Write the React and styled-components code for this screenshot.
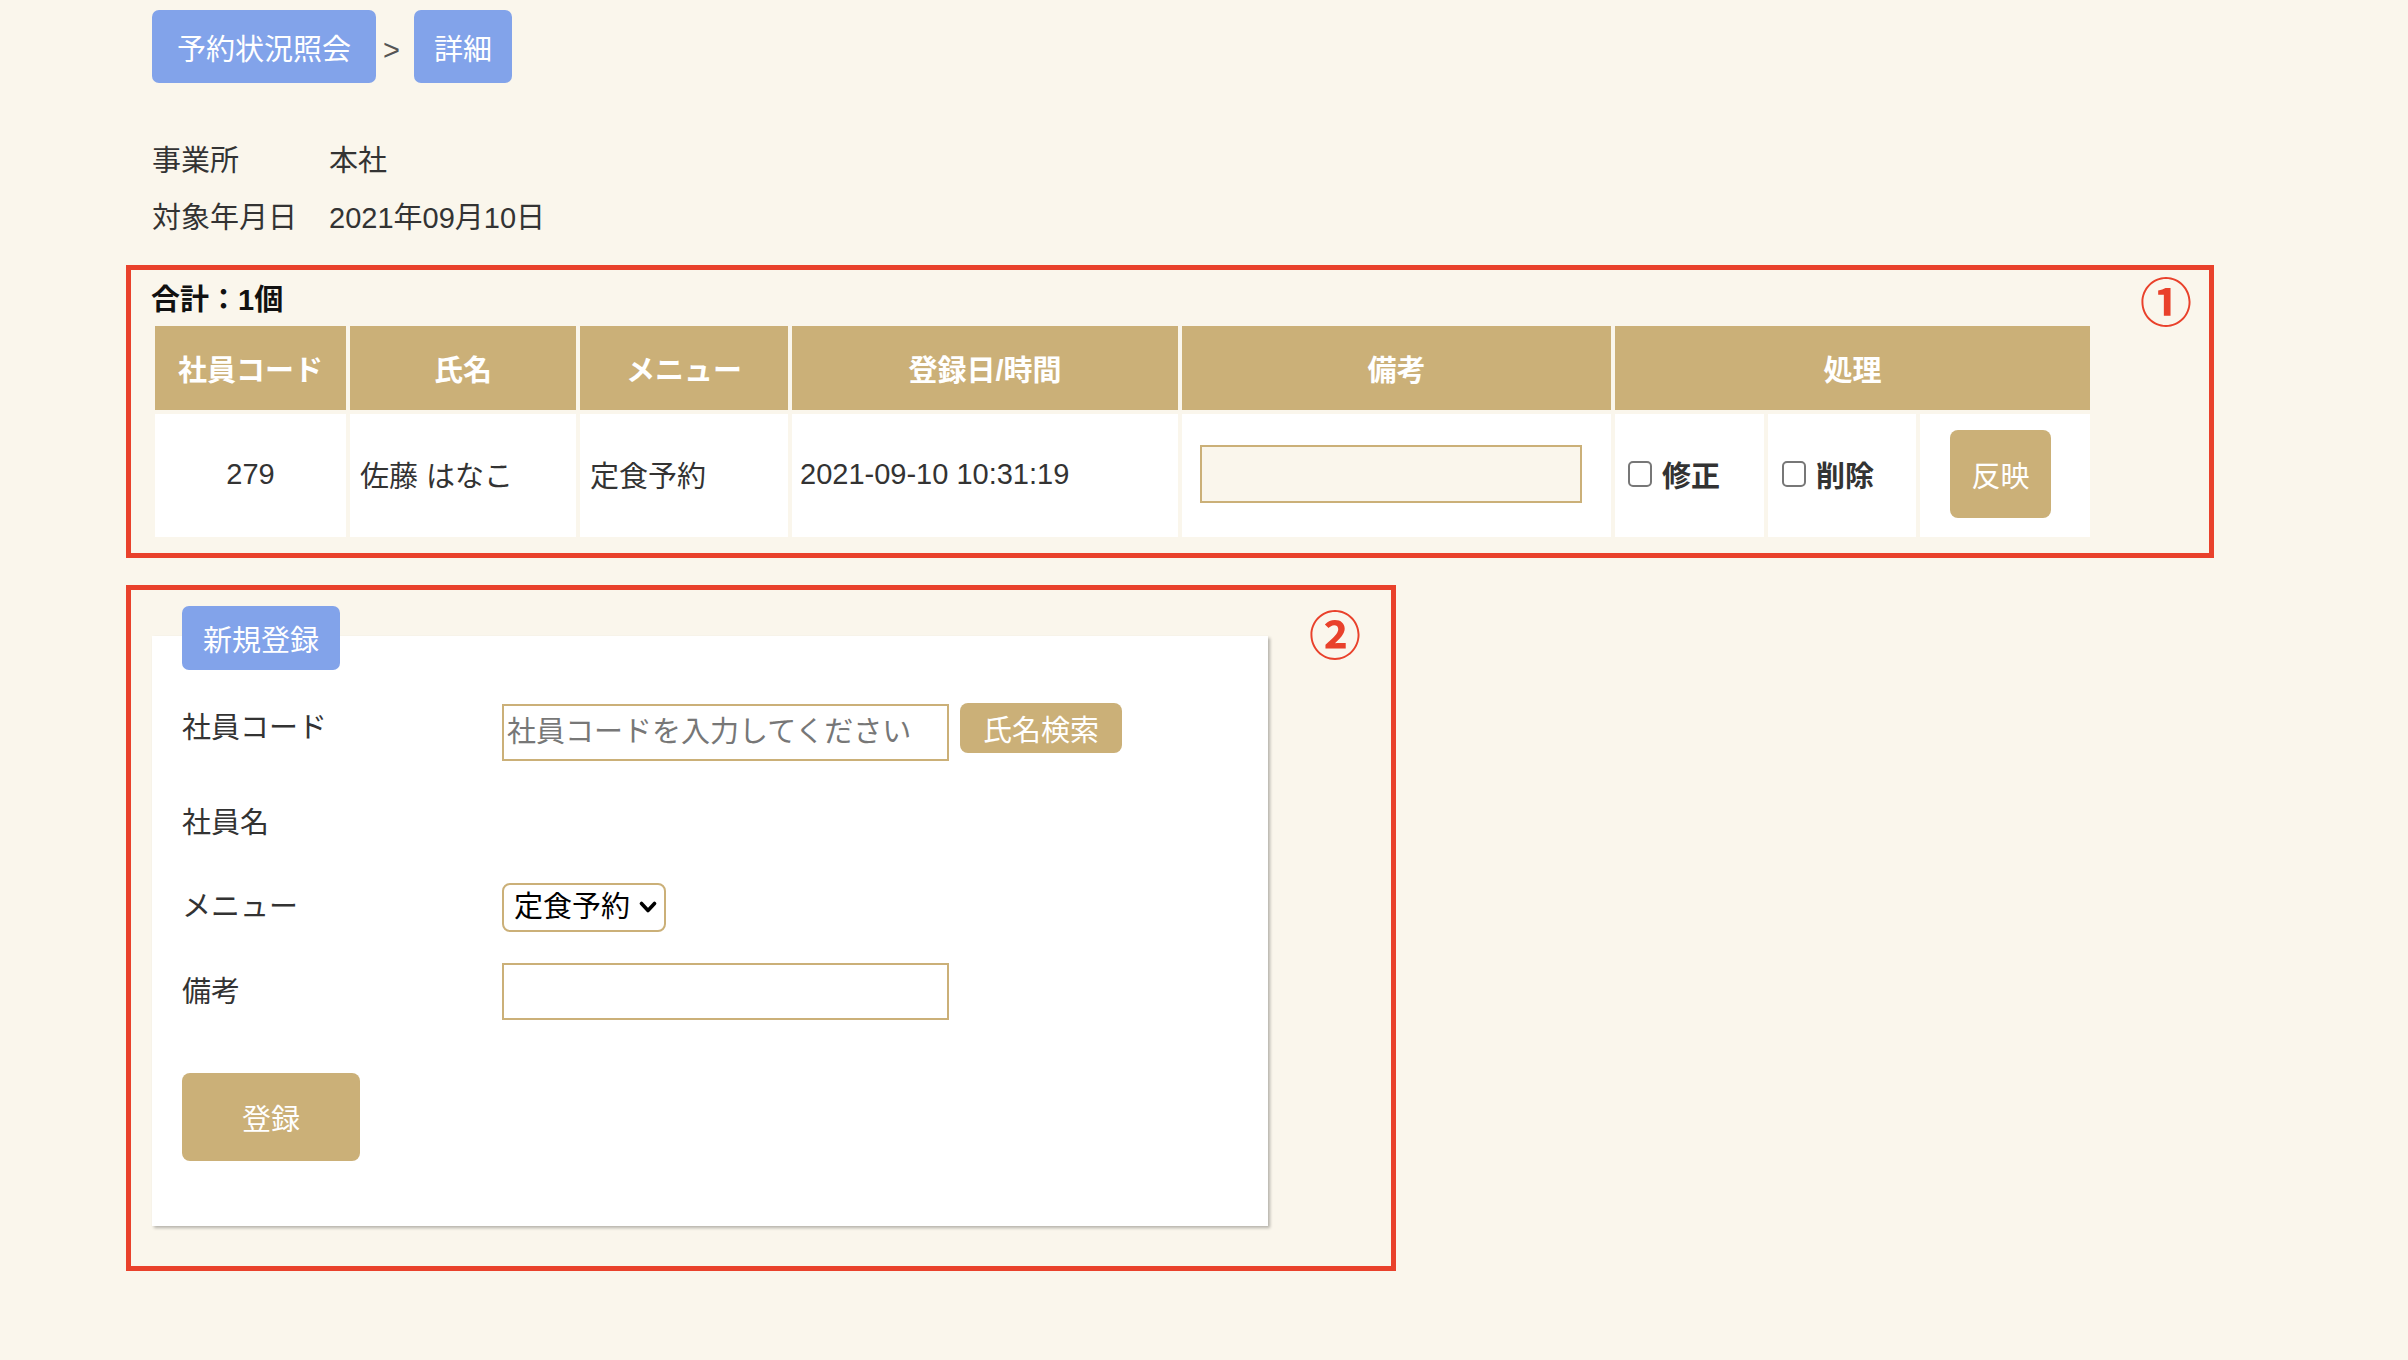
import React from 'react'
import styled, { createGlobalStyle } from 'styled-components'

const FONT = `"Liberation Sans", "Noto Sans CJK JP", sans-serif`
const TAN = '#cbb078'
const BLUE = '#82a3ea'
const RED = '#e9412b'
const INK = '#333'
const CREAM = '#faf6ec'

const GlobalStyle = createGlobalStyle`
  * { box-sizing: border-box; }
  html, body { margin: 0; padding: 0; background: ${CREAM}; }
  body {
    font-family: ${FONT};
    font-size: 29px;
    color: ${INK};
  }
  button, input, select { font-family: inherit; }
`

const Page = styled.div`
  min-height: 1360px;
  padding: 10px 0 0 126px;
  display: flex;
  flex-direction: column;
  align-items: flex-start;
`

const Breadcrumb = styled.nav`
  display: flex;
  align-items: center;
  margin-left: 26px;
`

const CrumbButton = styled.button`
  height: 73px;
  padding: 0 ${p => p.$pad}px;
  border: none;
  border-radius: 7px;
  background: ${BLUE};
  color: #fff;
  font-size: 29px;
`

const CrumbSep = styled.span`
  margin: 8px 14px 0 7px;
  color: #555;
  font-size: 29px;
`

const InfoList = styled.dl`
  display: grid;
  grid-template-columns: 177px auto;
  grid-auto-rows: 57px;
  align-items: center;
  margin: 46px 0 0 26px;

  dt, dd {
    margin: 0;
  }
`

const Annotated = styled.section`
  position: relative;
  width: ${p => p.$width}px;
  margin-top: ${p => p.$top}px;
  padding: ${p => p.$pad};
  border: 5px solid ${RED};
`

const Marker = styled.span`
  position: absolute;
  top: ${p => p.$top}px;
  right: ${p => p.$right}px;
  color: ${RED};
  font-family: "Noto Sans CJK JP", sans-serif;
  font-size: 52px;
  font-weight: 700;
  line-height: 1;
`

const Total = styled.div`
  font-weight: 700;
  line-height: 40px;
  color: #111;
`

const Table = styled.table`
  border-collapse: separate;
  border-spacing: 4px;
  table-layout: fixed;
  width: 1943px;
  margin-top: 2px;
`

const Col = styled.col`
  width: ${p => p.$w}px;
`

const HeadCell = styled.th`
  height: 84px;
  padding: 0;
  background: ${TAN};
  color: #fff;
  font-weight: 700;
  text-align: center;
`

const Cell = styled.td`
  height: 123px;
  padding: 0 0 3px ${p => p.$pad}px;
  background: #fff;
  text-align: ${p => (p.$center ? 'center' : 'left')};
  white-space: nowrap;
`

const NoteInput = styled.input`
  display: block;
  width: 382px;
  height: 58px;
  border: 2px solid ${TAN};
  background: ${CREAM};
  outline: none;
`

const CheckLabel = styled.label`
  display: inline-flex;
  align-items: center;
  gap: 10px;
  font-weight: 700;
`

const CheckBox = styled.input.attrs({ type: 'checkbox' })`
  appearance: none;
  width: 24px;
  height: 26px;
  margin: 0;
  border: 2px solid #777;
  border-radius: 5px;
  background: #fff;
`

const TanButton = styled.button`
  width: ${p => p.$w}px;
  height: ${p => p.$h}px;
  margin-left: ${p => p.$ml || 0}px;
  margin-top: ${p => p.$mt || 0}px;
  padding: 0;
  border: none;
  border-radius: 8px;
  background: ${TAN};
  color: #fff;
  font-size: 29px;
`

const Panel = styled.div`
  display: flex;
  flex-direction: column;
  align-items: flex-start;
  width: 1116px;
  margin-top: 30px;
  padding: 0 30px 65px;
  background: #fff;
  box-shadow: 2px 2px 3px rgba(0, 0, 0, 0.28);
`

const PanelTab = styled.div`
  display: flex;
  align-items: center;
  height: 64px;
  margin-top: -30px;
  padding: 0 21px;
  border-radius: 7px;
  background: ${BLUE};
  color: #fff;
`

const FormRow = styled.div`
  display: grid;
  grid-template-columns: 320px auto;
  align-items: ${p => (p.$top ? 'start' : 'center')};
  margin-top: ${p => p.$gap}px;
`

const FormLabel = styled.span`
  line-height: 50px;
`

const Field = styled.div`
  display: flex;
  align-items: flex-start;
`

const TextInput = styled.input`
  width: 447px;
  height: 57px;
  margin-top: ${p => p.$mt || 0}px;
  padding: 0 3px;
  border: 2px solid ${TAN};
  background: #fff;
  font-size: 29px;
  color: ${INK};
  outline: none;

  &::placeholder {
    color: #777;
  }
`

const SelectWrap = styled.div`
  position: relative;
  width: 164px;
  height: 49px;

  svg {
    position: absolute;
    right: 9px;
    top: 18px;
    pointer-events: none;
  }
`

const Select = styled.select`
  appearance: none;
  width: 100%;
  height: 100%;
  padding: 0 0 0 10px;
  border: 2px solid ${TAN};
  border-radius: 8px;
  background: #fff;
  color: #000;
  font-size: 29px;
  outline: none;
`

const columns = [191, 226, 208, 386, 429, 149, 148, 170]

export default function App () {
  return (
    <>
      <GlobalStyle />
      <Page>
        <Breadcrumb>
          <CrumbButton $pad={25}>予約状況照会</CrumbButton>
          <CrumbSep>&gt;</CrumbSep>
          <CrumbButton $pad={20}>詳細</CrumbButton>
        </Breadcrumb>

        <InfoList>
          <dt>事業所</dt>
          <dd>本社</dd>
          <dt>対象年月日</dt>
          <dd>2021年09月10日</dd>
        </InfoList>

        <Annotated $width={2088} $top={22} $pad='10px 0 12px 20px'>
          <Marker $top={4} $right={17}>①</Marker>
          <Total>合計：1個</Total>
          <Table>
            <colgroup>
              {columns.map((w, i) => <Col key={i} $w={w} />)}
            </colgroup>
            <thead>
              <tr>
                <HeadCell>社員コード</HeadCell>
                <HeadCell>氏名</HeadCell>
                <HeadCell>メニュー</HeadCell>
                <HeadCell>登録日/時間</HeadCell>
                <HeadCell>備考</HeadCell>
                <HeadCell colSpan={3}>処理</HeadCell>
              </tr>
            </thead>
            <tbody>
              <tr>
                <Cell $pad={0} $center>279</Cell>
                <Cell $pad={10}>佐藤 はなこ</Cell>
                <Cell $pad={10}>定食予約</Cell>
                <Cell $pad={8}>2021-09-10 10:31:19</Cell>
                <Cell $pad={18}><NoteInput /></Cell>
                <Cell $pad={13}>
                  <CheckLabel><CheckBox />修正</CheckLabel>
                </Cell>
                <Cell $pad={14}>
                  <CheckLabel><CheckBox />削除</CheckLabel>
                </Cell>
                <Cell $pad={30}>
                  <TanButton $w={101} $h={88}>反映</TanButton>
                </Cell>
              </tr>
            </tbody>
          </Table>
        </Annotated>

        <Annotated $width={1270} $top={27} $pad='16px 0 40px 21px'>
          <Marker $top={17} $right={30}>②</Marker>
          <Panel>
            <PanelTab>新規登録</PanelTab>

            <FormRow $gap={33} $top>
              <FormLabel>社員コード</FormLabel>
              <Field>
                <TextInput $mt={1} placeholder='社員コードを入力してください' />
                <TanButton $w={162} $h={50} $ml={11}>氏名検索</TanButton>
              </Field>
            </FormRow>

            <FormRow $gap={37}>
              <FormLabel>社員名</FormLabel>
              <span />
            </FormRow>

            <FormRow $gap={34}>
              <FormLabel>メニュー</FormLabel>
              <SelectWrap>
                <Select defaultValue='teishoku'>
                  <option value='teishoku'>定食予約</option>
                </Select>
                <svg width='18' height='13' viewBox='0 0 18 13'>
                  <path d='M2.5 2.5 L9 9.5 L15.5 2.5' fill='none' stroke='#000' strokeWidth='3.6' strokeLinecap='round' strokeLinejoin='round' />
                </svg>
              </SelectWrap>
            </FormRow>

            <FormRow $gap={31}>
              <FormLabel>備考</FormLabel>
              <TextInput />
            </FormRow>

            <TanButton $w={178} $h={88} $mt={53}>登録</TanButton>
          </Panel>
        </Annotated>
      </Page>
    </>
  )
}
